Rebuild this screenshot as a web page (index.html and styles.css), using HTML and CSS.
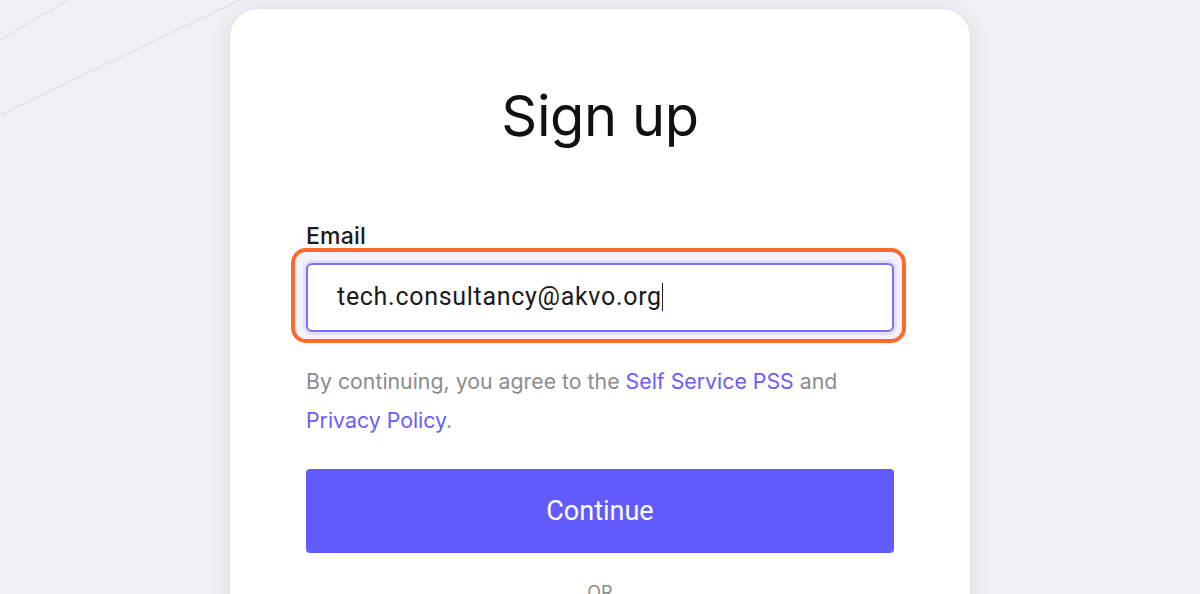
FILE: index.html
```html
<!DOCTYPE html>
<html lang="en">
<head>
<meta charset="utf-8">
<title>Sign up</title>
<link rel="stylesheet" href="styles.css">
</head>
<body>
<svg class="bg-lines" width="1200" height="594" viewBox="0 0 1200 594" aria-hidden="true">
  <line x1="-10" y1="46" x2="78" y2="-6" />
  <line x1="-10" y1="120" x2="252" y2="-6" />
</svg>
<main class="card">
  <h1 class="title">Sign up</h1>
  <form class="form">
    <label class="label" for="email">Email</label>
    <div class="highlight">
      <div class="input">tech.consultancy@akvo.org<span class="caret"></span></div>
    </div>
    <p class="terms">By continuing, you agree to the <a href="#">Self Service PSS</a> and <a href="#">Privacy Policy</a>.</p>
    <button type="button" class="btn">Continue</button>
    <div class="or">OR</div>
  </form>
</main>
</body>
</html>
```

FILE: styles.css
```css
html, body {
  margin: 0;
  padding: 0;
  height: 594px;
  overflow: hidden;
}
body {
  background: #f0f1f5;
  font-family: Inter, "Liberation Sans", sans-serif;
  position: relative;
}
.bg-lines {
  position: absolute;
  left: 0;
  top: 0;
}
.bg-lines line {
  stroke: #dcdde2;
  stroke-width: 1.2;
}
.card {
  position: relative;
  width: 740px;
  margin: 9px auto 0;
  background: #fff;
  border-radius: 28px;
  box-shadow: 0 0 2px rgba(0,0,0,0.08), 0 4px 24px rgba(30,30,60,0.10);
  padding: 0 76px;
  box-sizing: border-box;
  height: 700px;
}
.title {
  margin: 0;
  padding-top: 74px;
  text-align: center;
  font-weight: 400;
  font-size: 56px;
  line-height: 66px;
  color: #111;
  letter-spacing: -0.4px;
}
.form {
  display: flex;
  flex-direction: column;
  padding-top: 74px;
}
.label {
  font-size: 23px;
  font-weight: 500;
  color: #1a1a1a;
  line-height: 26px;
  letter-spacing: 0.2px;
}
.highlight {
  margin: -1px -12px 0 -15px;
  border: 4px solid #ff6a2a;
  border-radius: 15px;
  padding: 11px 8px 7px 11px;
  background: #f4f2ff;
}
.input {
  height: 69px;
  box-sizing: border-box;
  border: 2px solid #7c70ff;
  border-radius: 6px;
  background: #fff;
  box-shadow: 0 0 0 3px #e3e0ff;
  font-family: Roboto, "Liberation Sans", sans-serif;
  font-size: 25px;
  letter-spacing: 0.7px;
  color: #1a1a1a;
  display: flex;
  align-items: center;
  padding-left: 29px;
  padding-bottom: 2px;
}
.caret {
  display: inline-block;
  width: 1.5px;
  height: 28px;
  background: #222;
  margin-left: 0;
}
.terms {
  margin: 19px 0 0;
  font-size: 21.3px;
  line-height: 39px;
  color: #8c8c8c;
}
.terms a {
  color: #6c5cff;
  text-decoration: none;
}
.btn {
  margin-top: 29px;
  height: 84px;
  border: none;
  border-radius: 4px;
  background: #625bff;
  color: #fff;
  font-family: Roboto, "Liberation Sans", sans-serif;
  font-size: 27px;
  cursor: pointer;
}
.or {
  margin-top: 29px;
  text-align: center;
  color: #8c8c8c;
  font-size: 18px;
}
```
